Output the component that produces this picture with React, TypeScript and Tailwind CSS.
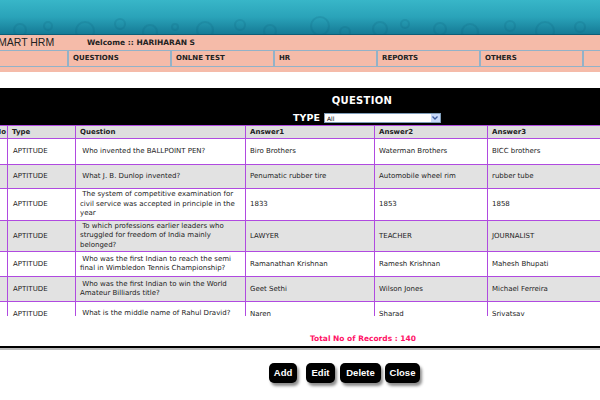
import React from "react";

const navItems = ["HOME", "QUESTIONS", "ONLNE TEST", "HR", "REPORTS", "OTHERS"];

type Row = {
  type: string;
  question: string[];
  a1: string;
  a2: string;
  a3: string;
  h: string;
};

const rows: Row[] = [
  { type: "APTITUDE", question: ["\u00a0Who invented the BALLPOINT PEN?"], a1: "Biro Brothers", a2: "Waterman Brothers", a3: "BICC brothers", h: "h-[26px]" },
  { type: "APTITUDE", question: ["\u00a0What J. B. Dunlop invented?"], a1: "Penumatic rubber tire", a2: "Automobile wheel rim", a3: "rubber tube", h: "h-[24px]" },
  {
    type: "APTITUDE",
    question: ["\u00a0The system of competitive examination for", "civil service was accepted in principle in the", "year"],
    a1: "1833",
    a2: "1853",
    a3: "1858",
    h: "h-[32px]"
  },
  {
    type: "APTITUDE",
    question: ["\u00a0To which professions earlier leaders who", "struggled for freedom of India mainly", "belonged?"],
    a1: "LAWYER",
    a2: "TEACHER",
    a3: "JOURNALIST",
    h: "h-[31px]"
  },
  {
    type: "APTITUDE",
    question: ["\u00a0Who was the first Indian to reach the semi", "final in Wimbledon Tennis Championship?"],
    a1: "Ramanathan Krishnan",
    a2: "Ramesh Krishnan",
    a3: "Mahesh Bhupati",
    h: "h-[25px]"
  },
  {
    type: "APTITUDE",
    question: ["\u00a0Who was the first Indian to win the World", "Amateur Billiards title?"],
    a1: "Geet Sethi",
    a2: "Wilson Jones",
    a3: "Michael Ferreira",
    h: "h-[25px]"
  },
  { type: "APTITUDE", question: ["\u00a0What is the middle name of Rahul Dravid?"], a1: "Naren", a2: "Sharad", a3: "Srivatsav", h: "h-[25px]" }
];

const cell = "border border-[#b04ae0] px-[4px] align-middle";
const btn = "h-[20px] rounded-[5px] bg-black text-white text-[9.5px] font-bold shadow-[2px_3px_3px_rgba(0,0,0,0.45)]";

function Bubbles() {
  const circles = [
    [20, 30, 6], [48, 26, 4], [85, 31, 9], [120, 24, 5], [150, 32, 7], [175, 27, 3],
    [205, 30, 8], [240, 25, 5], [270, 31, 6], [320, 26, 9], [345, 32, 5], [380, 29, 7],
    [405, 24, 4], [440, 29, 6], [470, 32, 8], [510, 26, 5], [545, 31, 9], [580, 27, 5]
  ];
  return (
    <svg className="absolute inset-0" width="600" height="35" viewBox="0 0 600 35">
      {circles.map(([x, y, r], i) => (
        <circle key={i} cx={x} cy={y} r={r} fill="none" stroke="#0b5f78" strokeOpacity="0.18" strokeWidth="2" />
      ))}
    </svg>
  );
}

export default function App() {
  return (
    <div className="w-[600px] h-[400px] overflow-hidden bg-white font-['DejaVu_Sans',Verdana,sans-serif] text-[#222]">
      <div className="relative h-[35px] bg-gradient-to-b from-[#38b6c8] via-[#2aa3b9] to-[#157b96] border-b border-[#0d5f78]">
        <Bubbles />
      </div>

      <div className="bg-[#f5bba9] h-[37px] flex flex-col">
        <div className="flex items-center h-[15px] pt-[1px]">
          <span className="ml-[-9px] w-[96px] text-[10.5px] font-['Liberation_Sans',Arial,sans-serif] text-[#222]">SMART HRM</span>
          <span className="text-[7.5px] font-bold">Welcome :: HARIHARAN S</span>
        </div>
        <div className="flex h-[17px] border-y border-[#92b2c8] ml-[-34px]">
          {navItems.map((item) => (
            <div key={item} className="w-[103px] shrink-0 border-r-2 border-[#92b2c8] pl-[4px] flex items-center text-[7px] font-bold">
              {item}
            </div>
          ))}
        </div>
      </div>

      <div className="h-[16px]" />

      <div className="bg-black h-[37px] flex flex-col items-center text-white font-bold">
        <div className="pl-[124px] pt-[5px] text-[10px] tracking-[0.3px]">QUESTION</div>
        <div className="flex items-center pl-[134px] mt-[3px]">
          <span className="text-[9.5px] mr-[4px]">TYPE</span>
          <div className="w-[117px] h-[10px] bg-white border border-[#7f9db9] flex items-center justify-between">
            <span className="text-[6px] font-normal text-black pl-[2px]">All</span>
            <span className="w-[9px] h-[8px] bg-[#c8d8f8] flex items-center justify-center">
              <svg width="6" height="4" viewBox="0 0 6 4">
                <path d="M0.5 0.5 L3 3 L5.5 0.5" fill="none" stroke="#3a5a9c" strokeWidth="1.3" />
              </svg>
            </span>
          </div>
        </div>
      </div>

      <div className="h-[191px] overflow-hidden">
        <table className="table-fixed border-collapse ml-[-11px] w-[650px] text-[7px]">
          <colgroup>
            <col className="w-[18px]" />
            <col className="w-[68px]" />
            <col className="w-[170px]" />
            <col className="w-[129px]" />
            <col className="w-[113px]" />
            <col className="w-[152px]" />
          </colgroup>
          <thead>
            <tr className="h-[13px] bg-[#dedede] font-bold text-left">
              <th className={cell + " text-right pr-[1px]"}>No</th>
              <th className={cell}>Type</th>
              <th className={cell}>Question</th>
              <th className={cell}>Answer1</th>
              <th className={cell}>Answer2</th>
              <th className={cell}>Answer3</th>
            </tr>
          </thead>
          <tbody>
            {rows.map((r, i) => (
              <tr key={i} className={r.h + " " + (i % 2 === 1 ? "bg-[#e2e2e2]" : "bg-white")}>
                <td className={cell}></td>
                <td className={cell + " pl-[5px]"}>{r.type}</td>
                <td className={cell + " leading-[9.4px]"}>
                  {r.question.map((line, j) => (
                    <div key={j} className="whitespace-nowrap">{line}</div>
                  ))}
                </td>
                <td className={cell}>{r.a1}</td>
                <td className={cell}>{r.a2}</td>
                <td className={cell}>{r.a3}</td>
              </tr>
            ))}
          </tbody>
        </table>
      </div>

      <div className="h-[30px] flex items-end justify-center pl-[126px] pb-[2px]">
        <span className="text-[7.5px] font-bold text-[#ff1166]">Total No of Records : 140</span>
      </div>
      <div className="h-[2px] bg-black" />
      <div className="h-[2px] bg-[#bbbbbb]" />

      <div className="flex items-center pl-[269px] pt-[13px] gap-[7px] font-['Liberation_Sans',Arial,sans-serif]">
        <button className={btn + " w-[28px]"}>Add</button>
        <button className={btn + " w-[29px] ml-[2px]"}>Edit</button>
        <button className={btn + " w-[41px] ml-[-2px]"}>Delete</button>
        <button className={btn + " w-[35px] ml-[-3px]"}>Close</button>
      </div>
    </div>
  );
}
